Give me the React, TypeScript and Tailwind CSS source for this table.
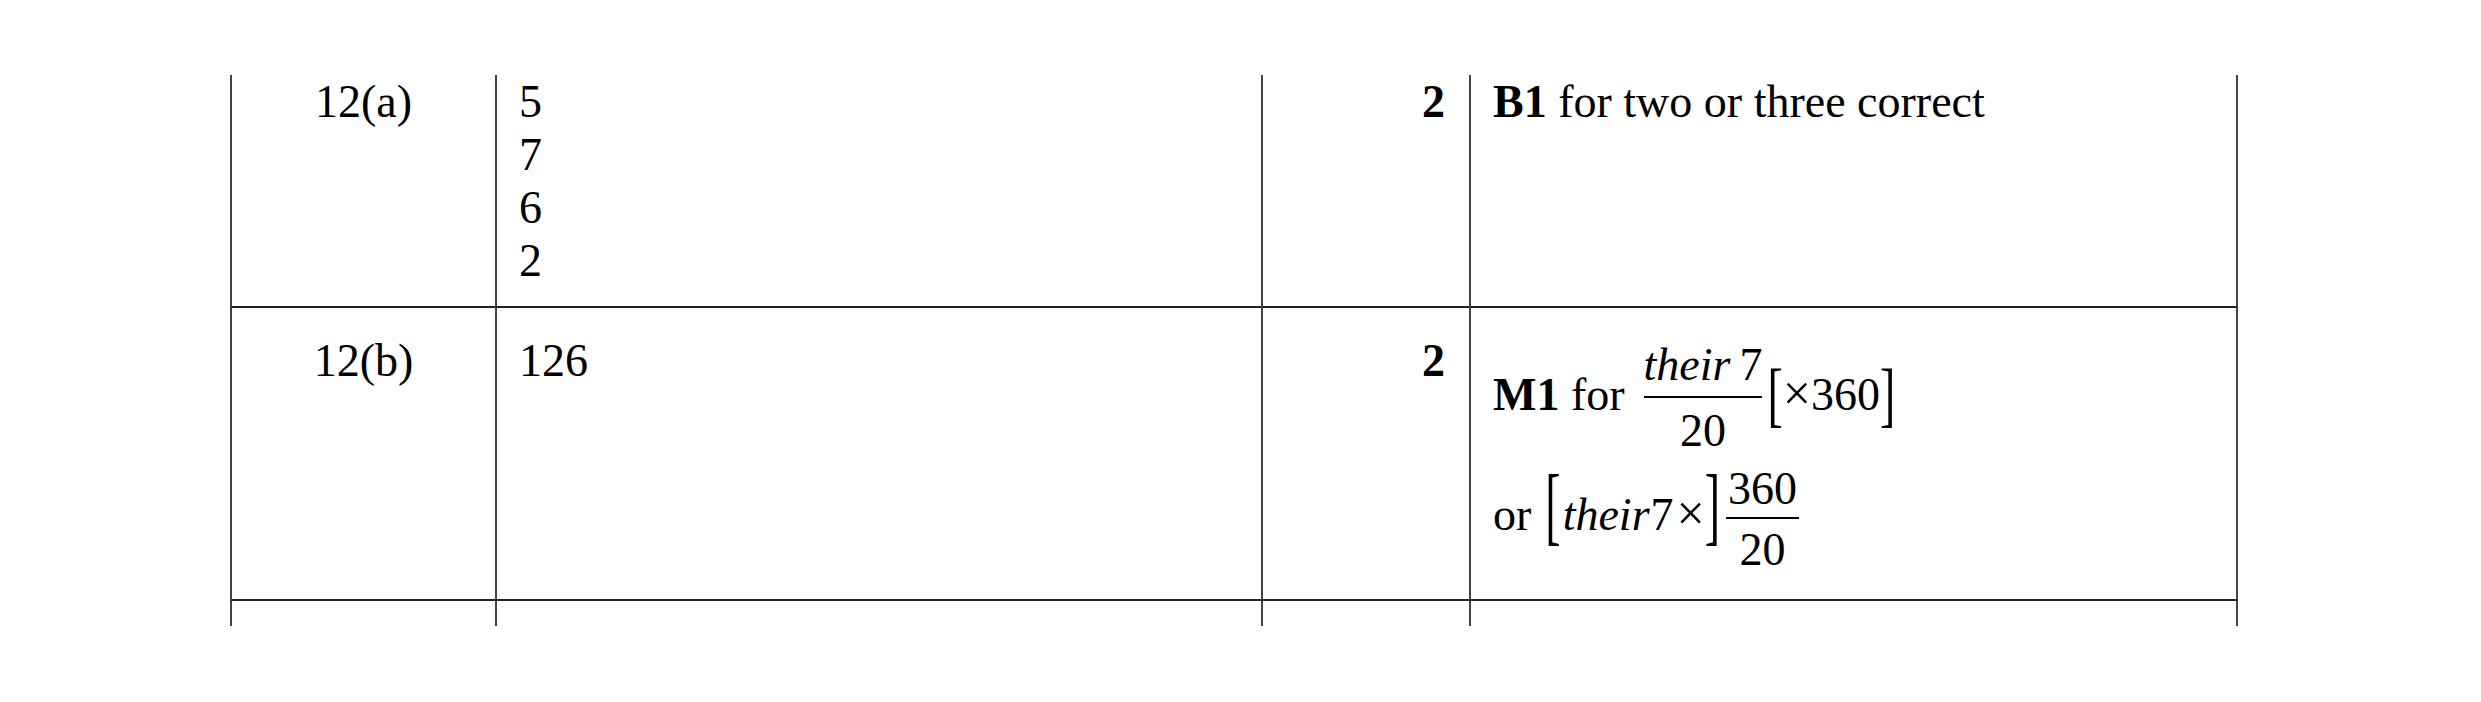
import React from "react";

// mark scheme table, rows 12(a) and 12(b)

function Cell(props: any) {
  return (
    <div
      className={`border-l-2 border-l-[#444] ${props.last ? "border-r-2 border-r-[#444]" : ""} ${props.className || ""}`}
    >
      {props.children}
    </div>
  );
}

function Bracket(props: any) {
  return (
    <span className={`inline-block ${props.className || ""}`}>{props.children}</span>
  );
}

export default function App() {
  return (
    <div className="w-[2481px] h-[702px] bg-white text-black font-['Liberation_Serif','Times_New_Roman',serif] text-[46px] leading-[53px]">
      <div className="pt-[75px] pl-[230px]">
        <div className="grid grid-cols-[265px_766px_208px_769px]">
          {/* row 12(a) */}
          <Cell className="h-[233px] border-b-2 border-b-[#222] text-center">12(a)</Cell>
          <Cell className="h-[233px] border-b-2 border-b-[#222] pl-[22px]">
            <div>5</div>
            <div>7</div>
            <div>6</div>
            <div>2</div>
          </Cell>
          <Cell className="h-[233px] border-b-2 border-b-[#222] text-right pr-[24px] font-bold">2</Cell>
          <Cell last className="h-[233px] border-b-2 border-b-[#222] pl-[22px] whitespace-nowrap">
            <b>B1</b> for two or three correct
          </Cell>

          {/* row 12(b) */}
          <Cell className="h-[293px] border-b-2 border-b-[#222] pt-[26px] text-center">12(b)</Cell>
          <Cell className="h-[293px] border-b-2 border-b-[#222] pt-[26px] pl-[22px]">126</Cell>
          <Cell className="h-[293px] border-b-2 border-b-[#222] pt-[26px] text-right pr-[24px] font-bold">2</Cell>
          <Cell last className="h-[293px] border-b-2 border-b-[#222] pt-[59px] pl-[22px] flex flex-col gap-[67px]">
            <div className="h-[53px] whitespace-nowrap">
              <b>M1</b> for
              <span className="inline-flex flex-col items-center align-[30px] -my-[40px] ml-[19px]">
                <span className="leading-none whitespace-nowrap">
                  <i>their</i>
                  <span className="ml-[9px]">7</span>
                </span>
                <span className="mt-[8px] h-[2px] w-full bg-black" />
                <span className="mt-[10px] leading-none">20</span>
              </span>
              <Bracket className="ml-[5px] scale-y-[1.54]">[</Bracket>
              <span className="text-[50px]">×</span>360
              <Bracket className="scale-y-[1.54]">]</Bracket>
            </div>
            <div className="h-[53px] whitespace-nowrap">
              or
              <Bracket className="ml-[14px] scale-y-[1.88] -translate-y-[10px]">[</Bracket>
              <i className="ml-[2px]">their</i>
              <span className="ml-[1px]">7</span>
              <span className="ml-[3px] text-[50px]">×</span>
              <Bracket className="scale-y-[1.88] -translate-y-[10px]">]</Bracket>
              <span className="inline-flex flex-col items-center align-[26px] -my-[40px] ml-[6px]">
                <span className="leading-none px-[2px]">360</span>
                <span className="mt-[5px] h-[2px] w-full bg-black" />
                <span className="mt-[8px] leading-none">20</span>
              </span>
            </div>
          </Cell>

          {/* start of next row, cut off */}
          <Cell className="h-[25px]" />
          <Cell className="h-[25px]" />
          <Cell className="h-[25px]" />
          <Cell last className="h-[25px]" />
        </div>
      </div>
    </div>
  );
}
